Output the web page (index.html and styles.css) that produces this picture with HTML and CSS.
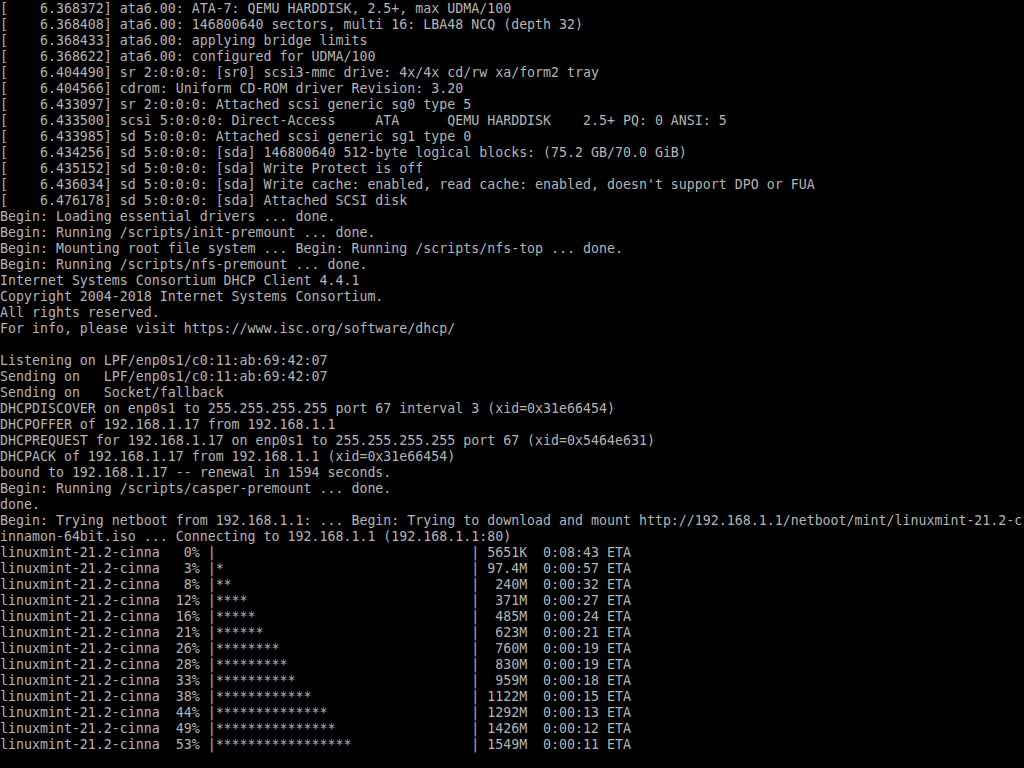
FILE: index.html
```html
<!DOCTYPE html>
<html lang="en">
<head>
<meta charset="utf-8">
<title>Console</title>
<link rel="stylesheet" href="styles.css">
</head>
<body>
<pre class="console">[    6.368372] ata6.00: ATA-7: QEMU HARDDISK, 2.5+, max UDMA/100
[    6.368408] ata6.00: 146800640 sectors, multi 16: LBA48 NCQ (depth 32)
[    6.368433] ata6.00: applying bridge limits
[    6.368622] ata6.00: configured for UDMA/100
[    6.404490] sr 2:0:0:0: [sr0] scsi3-mmc drive: 4x/4x cd/rw xa/form2 tray
[    6.404566] cdrom: Uniform CD-ROM driver Revision: 3.20
[    6.433097] sr 2:0:0:0: Attached scsi generic sg0 type 5
[    6.433500] scsi 5:0:0:0: Direct-Access     ATA      QEMU HARDDISK    2.5+ PQ: 0 ANSI: 5
[    6.433985] sd 5:0:0:0: Attached scsi generic sg1 type 0
[    6.434256] sd 5:0:0:0: [sda] 146800640 512-byte logical blocks: (75.2 GB/70.0 GiB)
[    6.435152] sd 5:0:0:0: [sda] Write Protect is off
[    6.436034] sd 5:0:0:0: [sda] Write cache: enabled, read cache: enabled, doesn't support DPO or FUA
[    6.476178] sd 5:0:0:0: [sda] Attached SCSI disk
Begin: Loading essential drivers ... done.
Begin: Running /scripts/init-premount ... done.
Begin: Mounting root file system ... Begin: Running /scripts/nfs-top ... done.
Begin: Running /scripts/nfs-premount ... done.
Internet Systems Consortium DHCP Client 4.4.1
Copyright 2004-2018 Internet Systems Consortium.
All rights reserved.
For info, please visit https://www.isc.org/software/dhcp/

Listening on LPF/enp0s1/c0:11:ab:69:42:07
Sending on   LPF/enp0s1/c0:11:ab:69:42:07
Sending on   Socket/fallback
DHCPDISCOVER on enp0s1 to 255.255.255.255 port 67 interval 3 (xid=0x31e66454)
DHCPOFFER of 192.168.1.17 from 192.168.1.1
DHCPREQUEST for 192.168.1.17 on enp0s1 to 255.255.255.255 port 67 (xid=0x5464e631)
DHCPACK of 192.168.1.17 from 192.168.1.1 (xid=0x31e66454)
bound to 192.168.1.17 -- renewal in 1594 seconds.
Begin: Running /scripts/casper-premount ... done.
done.
Begin: Trying netboot from 192.168.1.1: ... Begin: Trying to download and mount http://192.168.1.1/netboot/mint/linuxmint-21.2-c
innamon-64bit.iso ... Connecting to 192.168.1.1 (192.168.1.1:80)
linuxmint-21.2-cinna   0% |                                | 5651K  0:08:43 ETA
linuxmint-21.2-cinna   3% |*                               | 97.4M  0:00:57 ETA
linuxmint-21.2-cinna   8% |**                              |  240M  0:00:32 ETA
linuxmint-21.2-cinna  12% |****                            |  371M  0:00:27 ETA
linuxmint-21.2-cinna  16% |*****                           |  485M  0:00:24 ETA
linuxmint-21.2-cinna  21% |******                          |  623M  0:00:21 ETA
linuxmint-21.2-cinna  26% |********                        |  760M  0:00:19 ETA
linuxmint-21.2-cinna  28% |*********                       |  830M  0:00:19 ETA
linuxmint-21.2-cinna  33% |**********                      |  959M  0:00:18 ETA
linuxmint-21.2-cinna  38% |************                    | 1122M  0:00:15 ETA
linuxmint-21.2-cinna  44% |**************                  | 1292M  0:00:13 ETA
linuxmint-21.2-cinna  49% |***************                 | 1426M  0:00:12 ETA
linuxmint-21.2-cinna  53% |*****************               | 1549M  0:00:11 ETA</pre>
</body>
</html>
```
FILE: styles.css
```css
html, body {
  margin: 0;
  padding: 0;
  background: #000;
  width: 1024px;
  height: 768px;
  overflow: hidden;
}

.console {
  margin: 0;
  padding: 1px 0 0 0;
  color: #b4b4b4;
  font-family: "DejaVu Sans Mono", "Liberation Mono", monospace;
  font-size: 13.288px;
  line-height: 16px;
  white-space: pre;
  overflow: hidden;
  width: 1024px;
}
```
